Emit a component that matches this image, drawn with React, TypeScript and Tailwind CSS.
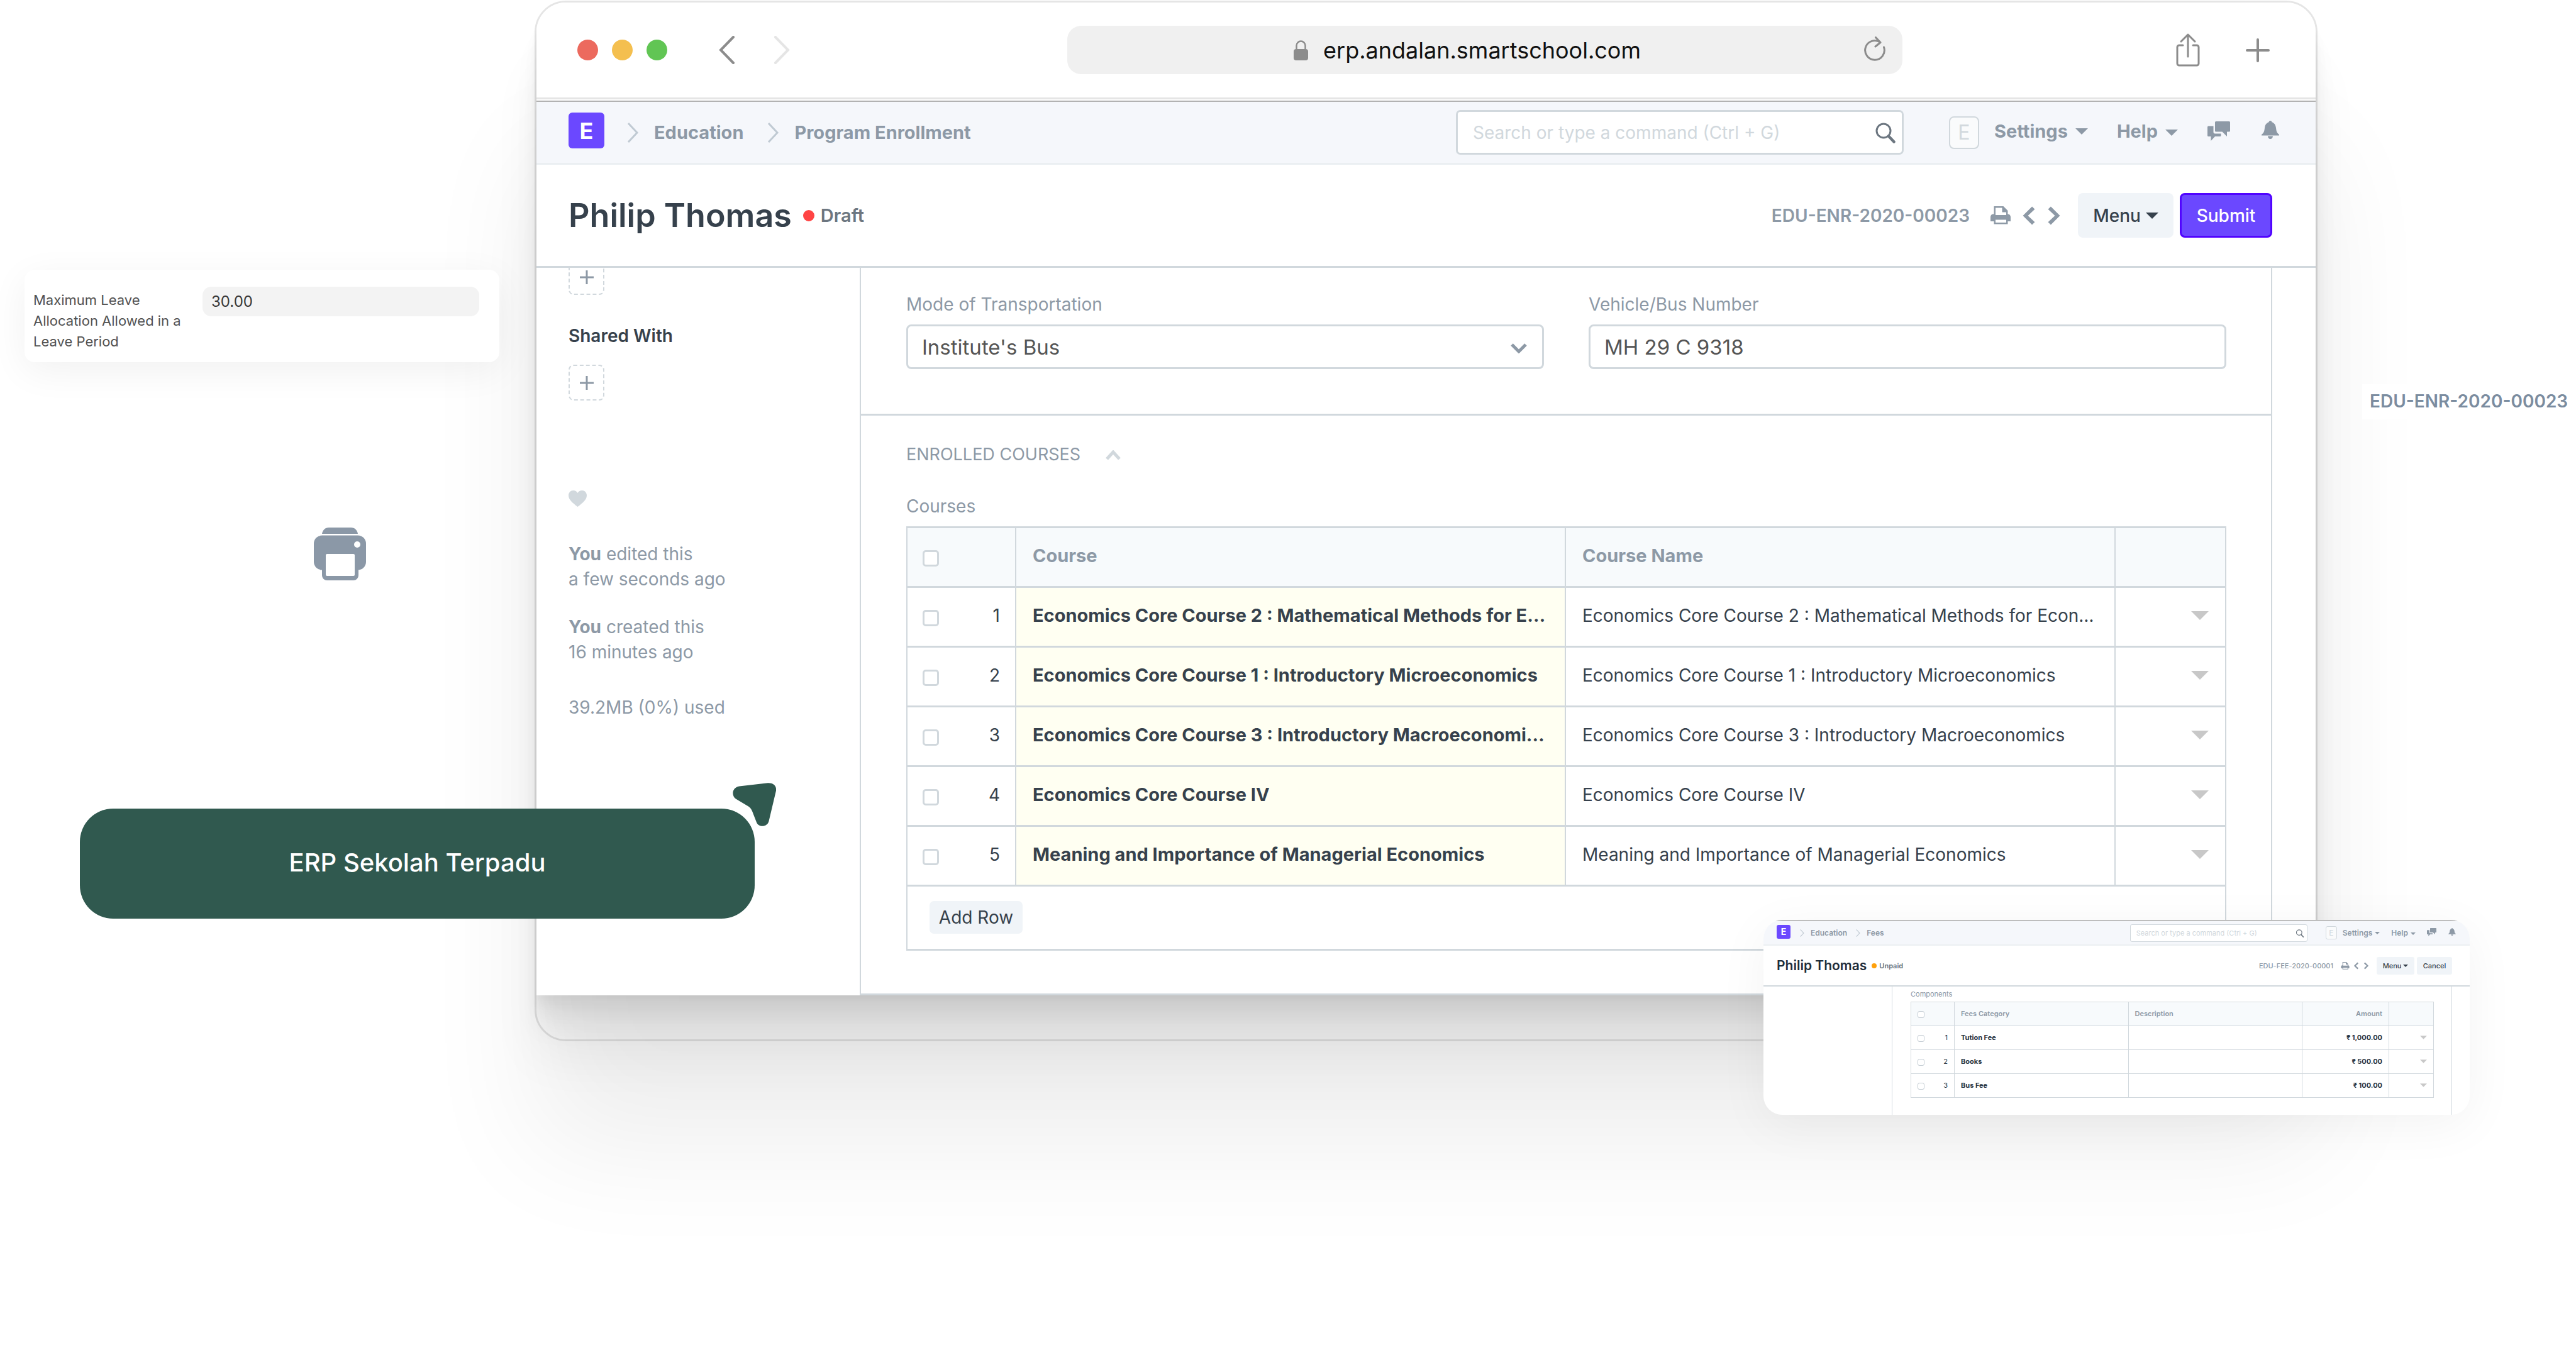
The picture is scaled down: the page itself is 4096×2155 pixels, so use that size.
import React from "react";

type IconProps = { className?: string };

const Chevron = ({ className }: IconProps) => (
  <svg viewBox="0 0 19 32" fill="none" stroke="currentColor" strokeWidth="3" className={className} aria-hidden="true">
    <path d="M2 1l14 15L2 31" />
  </svg>
);

const Caret = ({ className }: IconProps) => (
  <svg viewBox="0 0 20 10" fill="currentColor" className={className} aria-hidden="true">
    <path d="M0 0h20L10 10z" />
  </svg>
);

const RowCaret = ({ className }: IconProps) => (
  <svg viewBox="0 0 28 14" fill="currentColor" className={className} aria-hidden="true">
    <path d="M0 0h28L14 14z" />
  </svg>
);

const SearchIcon = ({ className }: IconProps) => (
  <svg viewBox="0 0 32 33" fill="none" stroke="currentColor" className={className} aria-hidden="true">
    <circle cx="13" cy="13" r="11" strokeWidth="3" />
    <path d="M21 21.500l8.500 9" strokeWidth="4.500" strokeLinecap="round" />
  </svg>
);

const ChatIcon = ({ className }: IconProps) => (
  <svg viewBox="0 0 36 31" fill="currentColor" className={className} aria-hidden="true">
    <path d="M13.500 0H34.500Q36 0 36 1.500V15Q36 16.500 34.500 16.500H31V24L23.500 16.500H13.500Q12 16.500 12 15V1.500Q12 0 13.500 0z" />
    <path d="M1.500 7.500H9.500V17Q9.500 19.500 12 19.500H21.500V22.500Q21.500 24 20 24H12L5.500 31V24H1.500Q0 24 0 22.500V9Q0 7.500 1.500 7.500z" />
  </svg>
);

const BellIcon = ({ className }: IconProps) => (
  <svg viewBox="0 0 28 29" fill="currentColor" className={className} aria-hidden="true">
    <path d="M14 0c1.500 0 2.300 1 2.300 2.200 4.500 1.300 6.200 5 6.700 9.300.6 5 1 7.500 5 10.500v1.500H0V22c4-3 4.400-5.500 5-10.500.5-4.300 2.200-8 6.700-9.300C11.700 1 12.500 0 14 0zM10 24.500h8c0 2.500-1.800 4.500-4 4.500s-4-2-4-4.500z" />
  </svg>
);

const PrintIcon = ({ className }: IconProps) => (
  <svg viewBox="0 0 32 29" fill="currentColor" fillRule="evenodd" className={className} aria-hidden="true">
    <path d="M5.500 0H20.500L27.500 7V12.500C30 12.500 32 14.500 32 17V24H27.500V28.500H5.500V24H0V17C0 14.500 2 12.500 4.500 12.500H5.500zM8 2.500V14H25V9.500H18.500V2.500zM8 21.500V26H25V21.500z" />
  </svg>
);

const AngleLeft = ({ className }: IconProps) => (
  <svg viewBox="0 2.500 7.500 11" fill="currentColor" className={className} aria-hidden="true">
    <path d="M5.500 3L7 4.500 3.250 8 7 11.500 5.500 13l-5-5 5-5z" />
  </svg>
);

const AngleRight = ({ className }: IconProps) => (
  <svg viewBox="0.500 2.500 7.500 11" fill="currentColor" className={className} aria-hidden="true">
    <path d="M7.500 8l-5 5L1 11.500 4.750 8 1 4.500 2.500 3l5 5z" />
  </svg>
);

const PlusIcon = ({ className }: IconProps) => (
  <svg viewBox="0 0 24 24" fill="none" stroke="currentColor" strokeWidth="3" className={className} aria-hidden="true">
    <path d="M12 1v22M1 12h22" />
  </svg>
);

function BrowserBar() {
  return (
    <div className="flex h-[154px] items-center border-b-[3px] border-[#e5e5e5] pr-[73px] pl-[65px] text-[#8c8c8c]">
      <div className="flex w-[779px] shrink-0 items-center">
        <div className="flex gap-[22px]">
          <span className="size-[33px] rounded-full bg-[#ec6a5e]" />
          <span className="size-[33px] rounded-full bg-[#f4bf4f]" />
          <span className="size-[33px] rounded-full bg-[#61c554]" />
        </div>
        <button aria-label="Back" className="ml-[82px]">
          <svg viewBox="0 0 25 45" className="h-[45px] w-[25px]" fill="none" stroke="currentColor" strokeWidth="4" strokeLinecap="round">
            <path d="M23 2L3 22.500 23 43" />
          </svg>
        </button>
        <button aria-label="Forward" className="ml-[63px] text-[#e5e5e5]">
          <svg viewBox="0 0 25 45" className="h-[45px] w-[25px]" fill="none" stroke="currentColor" strokeWidth="4" strokeLinecap="round">
            <path d="M2 2l20 20.500L2 43" />
          </svg>
        </button>
      </div>
      <div className="relative flex h-[77px] w-[1328px] items-center justify-center gap-6 rounded-[22px] bg-[#f0f0f0] pr-14">
        <svg viewBox="0 0 23 32" className="h-8 w-[23px]" fill="none" aria-hidden="true">
          <rect y="14" width="23" height="18" rx="4" fill="currentColor" />
          <path d="M4.500 15V8.500a7 7 0 0 1 14 0V15" stroke="currentColor" strokeWidth="2.500" />
        </svg>
        <span className="text-4xl leading-10 text-[#111111]">erp.andalan.smartschool.com</span>
        <button aria-label="Reload" className="absolute right-[27px] top-[17px]">
          <svg viewBox="0 0 34 39" className="h-[39px] w-[34px]" fill="none" stroke="currentColor" strokeWidth="3" strokeLinecap="round" strokeLinejoin="round">
            <path d="M26 9.500A15.300 15.300 0 1 0 31.500 17M18.500 1.500l7.500 8-8 6.500" />
          </svg>
        </button>
      </div>
      <div className="flex flex-1 items-center justify-end gap-[73px]">
        <button aria-label="Share">
          <svg viewBox="0 0 38 53" className="h-[53px] w-[38px]" fill="none" stroke="currentColor" strokeWidth="3" strokeLinecap="round" strokeLinejoin="round">
            <path d="M19 2v35M8 13L19 2l11 11M11 19H5a3 3 0 0 0-3 3v26a3 3 0 0 0 3 3h28a3 3 0 0 0 3-3V22a3 3 0 0 0-3-3h-6" />
          </svg>
        </button>
        <button aria-label="New tab">
          <svg viewBox="0 0 38 38" className="size-[38px]" fill="none" stroke="currentColor" strokeWidth="4" strokeLinecap="round">
            <path d="M19 2v34M2 19h34" />
          </svg>
        </button>
      </div>
    </div>
  );
}

function Navbar() {
  return (
    <nav className="mt-[2px] flex h-[102px] items-center border-t-[2px] border-b-[3px] border-t-[#b2b2b2] border-b-[#ebeff2] bg-[#f5f7fb] pr-[58px] pl-[51px] text-[29px] leading-10 font-bold text-[#8d99a6]">
      <a href="#home" aria-label="Home" className="mb-[6px] flex size-[57px] items-center justify-center rounded-[6px] bg-[#6b48ff] text-4xl text-white">E</a>
      <Chevron className="ml-9 h-8 w-[19px] text-[#c0cad3]" />
      <a href="#education" className="ml-6">Education</a>
      <Chevron className="ml-[38px] h-8 w-[19px] text-[#c0cad3]" />
      <a href="#program-enrollment" className="ml-6">Program Enrollment</a>
      <div className="relative ml-auto h-[71px] w-[712px]">
        <input
          type="search"
          aria-label="Search"
          placeholder="Search or type a command (Ctrl + G)"
          className="h-full w-full rounded-[7px] border-[3px] border-[#d1d8dd] bg-white pr-16 pl-6 text-[28px] font-normal placeholder:text-[#d1d8dd]"
        />
        <SearchIcon className="absolute top-[20px] right-[13px] h-[33px] w-8 text-[#6c7680]" />
      </div>
      <span className="ml-[72px] flex h-[52px] w-12 items-center justify-center rounded-[8px] border-[2px] border-[#d1d8dd] bg-[#fafbfc] text-[32px] font-normal text-[#d1d8dd]">E</span>
      <button className="mb-1 ml-6 flex items-center gap-3">
        Settings <Caret className="h-[10px] w-5" />
      </button>
      <button className="mb-1 ml-[46px] flex items-center gap-3">
        Help <Caret className="mt-1 h-[10px] w-5" />
      </button>
      <button aria-label="Chat" className="ml-[47px]"><ChatIcon className="mb-1 h-[31px] w-9" /></button>
      <button aria-label="Notifications" className="ml-[50px]"><BellIcon className="mb-2 h-[29px] w-7" /></button>
    </nav>
  );
}

function PageHeader() {
  return (
    <header className="flex h-[164px] items-center border-b-[3px] border-[#d1d8dd] pr-[69px] pl-[51px] text-[28px] leading-10 font-semibold text-[#8d99a6]">
      <h1 className="text-[52px] leading-[64px] font-semibold text-[#36414c]">Philip Thomas</h1>
      <span className="ml-[18px] size-[18px] rounded-full bg-[#ff4444]" />
      <span className="ml-[10px] text-[29px] text-[#6c7680]">Draft</span>
      <span className="ml-auto">EDU-ENR-2020-00023</span>
      <button aria-label="Print" className="ml-[33px]"><PrintIcon className="h-[29px] w-8" /></button>
      <button aria-label="Previous" className="ml-[18px]"><AngleLeft className="h-[32px] w-[22px]" /></button>
      <button aria-label="Next" className="ml-[18px]"><AngleRight className="h-[32px] w-[22px]" /></button>
      <button className="ml-[27px] flex h-[71px] w-[152px] items-center justify-center gap-2 rounded-[8px] bg-[#f0f4f8] font-medium text-[#36414c]">
        Menu <Caret className="h-[10px] w-5" />
      </button>
      <button className="ml-[10px] h-[71px] w-[147px] rounded-[8px] border-[3px] border-[#5104ff] bg-[#6b48ff] font-medium text-white">Submit</button>
    </header>
  );
}

function Sidebar() {
  return (
    <aside className="w-[516px] shrink-0 border-r-[2px] border-[#d1d8dd] pl-[51px] text-[28px] leading-10 text-[#8d99a6]">
      <button aria-label="Add tag" className="-mt-[14px] flex size-[57px] items-center justify-center rounded-[8px] border-[2px] border-dashed border-[#d1d8dd]">
        <PlusIcon className="size-6" />
      </button>
      <h2 className="mt-[45px] font-semibold text-[#36414c]">Shared With</h2>
      <button aria-label="Share with" className="mt-[26px] flex size-[57px] items-center justify-center rounded-[8px] border-[2px] border-dashed border-[#d1d8dd]">
        <PlusIcon className="size-6" />
      </button>
      <button aria-label="Like" className="mt-[143px] block text-[#d1d8dd]">
        <svg viewBox="0 0 29 26" className="h-[26px] w-[29px]" fill="currentColor">
          <path d="M14.500 26C6 19.500 0 14.500 0 8 0 3.500 3.300 0 7.500 0c3 0 5.500 1.500 7 4 1.500-2.500 4-4 7-4C25.700 0 29 3.500 29 8c0 6.500-6 11.500-14.500 18z" />
        </svg>
      </button>
      <p className="mt-[55px]"><b className="font-bold">You</b> edited this<br />a few seconds ago</p>
      <p className="mt-9"><b className="font-bold">You</b> created this<br />16 minutes ago</p>
      <p className="mt-12">39.2MB (0%) used</p>
    </aside>
  );
}

const courses = [
  ["Economics Core Course 2 : Mathematical Methods for E…", "Economics Core Course 2 : Mathematical Methods for Econ…"],
  ["Economics Core Course 1 : Introductory Microeconomics", "Economics Core Course 1 : Introductory Microeconomics"],
  ["Economics Core Course 3 : Introductory Macroeconomi…", "Economics Core Course 3 : Introductory Macroeconomics"],
  ["Economics Core Course IV", "Economics Core Course IV"],
  ["Meaning and Importance of Managerial Economics", "Meaning and Importance of Managerial Economics"],
];

const checkbox = "mt-2 block size-[26px] appearance-none rounded-[5px] border-[3px] border-[#d1d8dd] bg-white";
const cell = "h-[95px] border-x-[2px] border-y-[3px] border-[#d1d8dd] px-[26px] pb-1 whitespace-nowrap";
const checkCell = "h-[95px] border-x-[2px] border-y-[3px] border-[#d1d8dd] px-6 pb-1";

function CoursesTable() {
  return (
    <table className="mt-3 w-full table-fixed border-collapse text-left">
      <colgroup>
        <col className="w-[173px]" />
        <col />
        <col />
        <col className="w-[176px]" />
      </colgroup>
      <thead className="bg-[#f7fafc]">
        <tr>
          <th className={checkCell}>
            <input type="checkbox" aria-label="Select all courses" className={checkbox} />
          </th>
          <th className={cell + " text-[29px] font-bold"}>Course</th>
          <th className={cell + " text-[29px] font-bold"}>Course Name</th>
          <th className={cell} aria-label="Actions" />
        </tr>
      </thead>
      <tbody className="text-[#36414c]">
        {courses.map(([course, name], i) => (
          <tr key={course}>
            <td className={checkCell}>
              <div className="flex items-center justify-between">
                <input type="checkbox" aria-label={"Select row " + (i + 1)} className={checkbox} />
                <span>{i + 1}</span>
              </div>
            </td>
            <td className={cell + " bg-[#fffff2] text-[29px] font-bold"}>{course}</td>
            <td className={cell}>{name}</td>
            <td className={cell}>
              <button aria-label={"Open row " + (i + 1)} className="ml-auto block text-[#c8c8c8]">
                <RowCaret className="h-[14px] w-7" />
              </button>
            </td>
          </tr>
        ))}
      </tbody>
    </table>
  );
}

function EnrollmentForm() {
  return (
    <div className="mr-[69px] min-w-0 flex-1 border-r-[2px] border-b-[3px] border-[#d1d8dd] text-[28px] leading-10 text-[#8d99a6]">
      <section className="grid grid-cols-2 gap-x-[71px] border-b-[3px] border-[#d1d8dd] pt-[38px] pr-[71px] pb-[71px] pl-[72px]">
        <div>
          <label htmlFor="mode">Mode of Transportation</label>
          <div className="relative mt-3">
            <select id="mode" className="block h-[71px] w-full appearance-none rounded-[8px] border-[3px] border-[#d1d8dd] bg-white px-[22px] text-[33px] text-[#555555]">
              <option>Institute's Bus</option>
            </select>
            <svg viewBox="0 0 26 16" className="pointer-events-none absolute top-[30px] right-[27px] h-4 w-[26px]" fill="none" stroke="currentColor" strokeWidth="5">
              <path d="M2 2l11 11L24 2" />
            </svg>
          </div>
        </div>
        <div>
          <label htmlFor="vehicle">Vehicle/Bus Number</label>
          <input id="vehicle" defaultValue="MH 29 C 9318" className="mt-3 block h-[71px] w-full rounded-[8px] border-[3px] border-[#d1d8dd] bg-white px-[22px] text-[33px] text-[#555555]" />
        </div>
      </section>
      <section className="pt-[42px] pr-[71px] pb-[68px] pl-[72px]">
        <h2 className="flex items-center gap-10 text-[27px]">
          ENROLLED COURSES
          <svg viewBox="0 0 24 15" className="h-[15px] w-6 text-[#d1d8dd]" fill="none" stroke="currentColor" strokeWidth="5" aria-hidden="true">
            <path d="M2 14L12 3l10 11" />
          </svg>
        </h2>
        <h3 className="mt-[42px]">Courses</h3>
        <CoursesTable />
        <div className="border-x-[2px] border-b-[3px] border-[#d1d8dd] pt-[23px] pb-6 pl-[35px]">
          <button className="h-[52px] w-[148px] rounded-[7px] bg-[#f0f4f8] text-[#36414c]">Add Row</button>
        </div>
      </section>
    </div>
  );
}

const fees = [
  ["Tution Fee", "₹ 1,000.00"],
  ["Books", "₹ 500.00"],
  ["Bus Fee", "₹ 100.00"],
];

const feeCell = "h-[38px] border border-[#d1d8dd] px-[10px] pb-[2px]";
const feeCheckbox = "mt-1 block size-[11px] appearance-none rounded-[3px] border border-[#c3ccd3] bg-white";

function FeesCard() {
  return (
    <section className="absolute top-[1463px] right-[169px] h-[310px] w-[1123px] overflow-hidden rounded-[30px] bg-white text-[11px] leading-4 text-[#8d99a6] shadow-[0_16px_80px_rgba(0,0,0,0.05)]">
      <nav className="flex h-[41px] items-center border-t-2 border-b-2 border-t-[#bdbdbd] border-b-[#ebeff2] bg-[#f5f7fb] pr-[22px] pl-[21px] text-xs font-semibold">
        <a href="#home" aria-label="Home" className="mb-[3px] flex size-[22px] items-center justify-center rounded-[3px] bg-[#6b48ff] text-sm font-bold text-white">E</a>
        <Chevron className="ml-[15px] h-3 w-[7px] text-[#c0cad3]" />
        <a href="#education" className="ml-[10px]">Education</a>
        <Chevron className="ml-[14px] h-3 w-[7px] text-[#c0cad3]" />
        <a href="#fees" className="ml-[10px]">Fees</a>
        <div className="relative ml-auto h-7 w-[282px]">
          <input type="search" aria-label="Search fees" placeholder="Search or type a command (Ctrl + G)" className="block h-full w-full rounded-[3px] border border-[#d1d8dd] bg-white pl-[9px] text-[11px] font-normal placeholder:text-[#d1d8dd]" />
          <SearchIcon className="absolute top-2 right-[5px] h-[13px] w-[14px] text-[#6c7680]" />
        </div>
        <span className="ml-[29px] flex h-[21px] w-[18px] items-center justify-center rounded-[3px] border border-[#d1d8dd] bg-[#fafbfc] font-normal text-[#d1d8dd]">E</span>
        <button className="ml-[9px] flex items-center gap-1">Settings <Caret className="h-1 w-2" /></button>
        <button className="ml-[18px] flex items-center gap-1">Help <Caret className="mt-[2px] h-1 w-2" /></button>
        <button aria-label="Chat" className="ml-[18px]"><ChatIcon className="mb-[2px] h-[13px] w-[15px]" /></button>
        <button aria-label="Notifications" className="ml-[19px]"><BellIcon className="mb-[3px] h-3 w-3" /></button>
      </nav>
      <header className="flex h-[65px] items-center border-b-2 border-[#d1d8dd] pr-7 pl-[21px] font-semibold">
        <h2 className="text-[21px] leading-7 font-semibold text-[#1f2d3a]">Philip Thomas</h2>
        <span className="ml-2 size-2 rounded-full bg-[#ffa00a]" />
        <span className="ml-1 text-[#6c7680]">Unpaid</span>
        <span className="ml-auto font-medium">EDU-FEE-2020-00001</span>
        <button aria-label="Print" className="ml-3"><PrintIcon className="h-3 w-[14px]" /></button>
        <button aria-label="Previous" className="ml-[6px]"><AngleLeft className="h-3 w-[9px]" /></button>
        <button aria-label="Next" className="ml-[7px]"><AngleRight className="h-3 w-[9px]" /></button>
        <button className="ml-3 flex h-7 w-[60px] items-center justify-center gap-[3px] rounded-[3px] bg-[#f0f4f8] font-medium text-[#36414c]">
          Menu <Caret className="h-1 w-2" />
        </button>
        <button className="ml-1 h-7 w-[56px] rounded-[3px] bg-[#f0f4f8] font-medium text-[#36414c]">Cancel</button>
      </header>
      <div className="flex h-full pl-[204px]">
        <div className="mr-7 flex-1 border-x border-[#d1d8dd] pt-[4px] pr-7 pl-[29px]">
          <h3>Components</h3>
          <table className="mt-1 w-full table-fixed border-collapse text-left">
            <colgroup>
              <col className="w-[69px]" />
              <col />
              <col />
              <col className="w-[138px]" />
              <col className="w-[71px]" />
            </colgroup>
            <thead className="bg-[#f7fafc]">
              <tr>
                <th className={feeCell}><input type="checkbox" aria-label="Select all fees" className={feeCheckbox} /></th>
                <th className={feeCell + " font-semibold"}>Fees Category</th>
                <th className={feeCell + " font-semibold"}>Description</th>
                <th className={feeCell + " text-right font-semibold"}>Amount</th>
                <th className={feeCell} aria-label="Actions" />
              </tr>
            </thead>
            <tbody className="font-bold text-[#27333f]">
              {fees.map(([name, amount], i) => (
                <tr key={name}>
                  <td className={feeCell}>
                    <div className="flex items-center justify-between font-normal">
                      <input type="checkbox" aria-label={"Select fee " + (i + 1)} className={feeCheckbox} />
                      <span>{i + 1}</span>
                    </div>
                  </td>
                  <td className={feeCell}>{name}</td>
                  <td className={feeCell} />
                  <td className={feeCell + " text-right"}>{amount}</td>
                  <td className={feeCell}>
                    <button aria-label={"Open fee " + (i + 1)} className="ml-auto block text-[#c8c8c8]">
                      <RowCaret className="h-[6px] w-[11px]" />
                    </button>
                  </td>
                </tr>
              ))}
            </tbody>
          </table>
        </div>
      </div>
    </section>
  );
}

export default function App() {
  return (
    <main className="relative min-h-screen overflow-hidden bg-white pt-px font-['Inter',sans-serif]">
      <div className="mr-[411px] ml-[850px] rounded-[50px] border-[3px] border-black/10 pb-[70px]">
        <div className="overflow-hidden rounded-t-[47px] bg-white shadow-[0_237px_190px_rgba(0,0,0,0.07),0_99px_79px_rgba(0,0,0,0.05),0_53px_42px_rgba(0,0,0,0.042),0_30px_24px_rgba(0,0,0,0.036),0_16px_13px_rgba(0,0,0,0.028),0_7px_5px_rgba(0,0,0,0.02)]">
          <BrowserBar />
          <Navbar />
          <PageHeader />
          <div className="flex overflow-hidden">
            <Sidebar />
            <EnrollmentForm />
          </div>
        </div>
      </div>

      <div className="absolute top-[429px] left-[39px] flex h-[147px] w-[755px] justify-between rounded-[16px] bg-white pt-[27px] pr-8 pl-[14px] shadow-[0_14px_60px_rgba(0,0,0,0.06)]">
        <label htmlFor="max-leave" className="w-[250px] pt-[5px] text-[22px] leading-[33px] text-[#525252]">
          Maximum Leave Allocation Allowed in a Leave Period
        </label>
        <input id="max-leave" defaultValue="30.00" className="h-[47px] w-[440px] rounded-[14px] bg-[#f3f3f3] px-[14px] text-2xl text-[#383838]" />
      </div>

      <svg viewBox="0 0 83 84" className="absolute top-[839px] left-[499px] h-[84px] w-[83px]" fill="#8b98a7" role="img" aria-label="Printer">
        <path d="M13 10C14 4 18 0 24 0H59C65 0 69 4 70 10z" />
        <rect y="12.500" width="83" height="55" rx="13" />
        <rect x="13" y="40" width="58" height="44" rx="8" />
        <rect x="19" y="42" width="46" height="35" rx="2" fill="white" />
        <circle cx="69" cy="27" r="5" fill="white" />
      </svg>

      <div className="absolute top-[1286px] left-[127px] flex h-[175px] w-[1073px] items-center justify-center rounded-[53px] bg-[#30594f] pb-1 text-[40px] leading-[48px] font-medium text-white">
        ERP Sekolah Terpadu
      </div>
      <svg viewBox="0 0 69 69" className="absolute top-[1245px] left-[1165px] size-[69px]" fill="#30594f" aria-hidden="true">
        <path d="M10.500 5.500L56 .3C64 0 70 4 69 12.500L57.500 61C55 71 41 71 38 63L31 45C29.500 41.500 28 39.500 25 37.500L5 25.500C-2.500 20 -1 7.500 10.500 5.500z" />
      </svg>

      <div className="absolute top-[611px] right-0 flex h-14 w-[340px] items-center bg-white pb-[3px] pl-3 text-[28px] leading-10 font-semibold whitespace-nowrap text-[#7b8c9f]">
        EDU-ENR-2020-00023
      </div>

      <FeesCard />
    </main>
  );
}
